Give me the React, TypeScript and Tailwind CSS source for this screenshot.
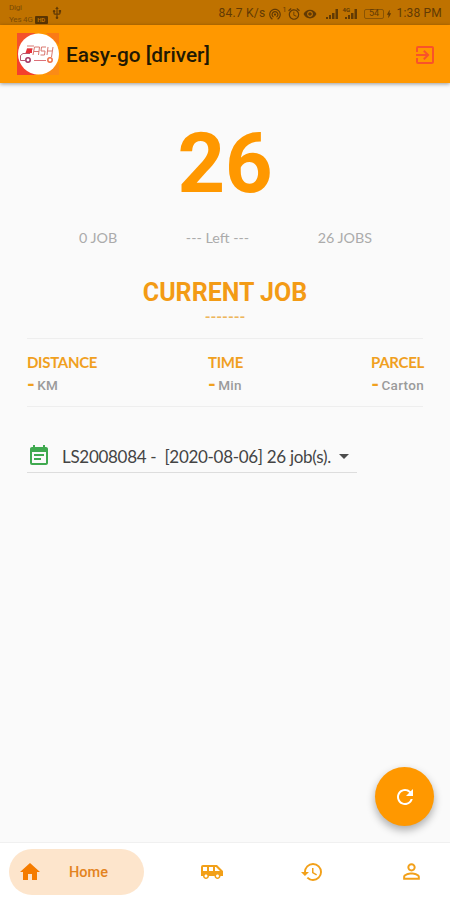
import React from "react";
import {
  MdExitToApp,
  MdHome,
  MdAirportShuttle,
  MdHistory,
  MdPersonOutline,
  MdRefresh,
  MdEventNote,
  MdArrowDropDown,
  MdUsb,
  MdAlarm,
  MdWifiTethering,
  MdRemoveRedEye,
  MdBolt,
} from "react-icons/md";

const roboto = "font-['Roboto','Liberation_Sans',sans-serif]";
const lato = "font-['Lato','Open_Sans',sans-serif]";

function SignalBars() {
  return (
    <svg viewBox="0 0 14 12" className="h-[12px] w-[14px] shrink-0" fill="currentColor">
      <rect x="0" y="9" width="2" height="2" />
      <rect x="3" y="7" width="2" height="4" />
      <rect x="6" y="5" width="2.500" height="6" />
      <rect x="9.500" y="1" width="2.500" height="10" />
    </svg>
  );
}

function StatusBar() {
  return (
    <div className="flex h-[25px] shrink-0 items-center bg-[#bf7200] pr-[8px] pl-[9px] text-[#623a04]">
      <div className="flex w-[40px] flex-col pt-[2px] text-[8px] leading-[12px] tracking-[-0.2px] text-[#7a4a06]">
        <span>Digi</span>
        <span className="flex items-center whitespace-nowrap">
          Yes 4G
          <span className="ml-[2px] flex h-[8px] w-[13px] shrink-0 items-center justify-center rounded-[1px] bg-[#5a3503] text-[6px] leading-none font-bold text-[#bf7200]">
            HD
          </span>
        </span>
      </div>
      <MdUsb className="ml-[1px] size-[14px]" />
      <div className="ml-auto flex items-center pt-[2px] text-[12px] leading-[23px]">
        <span className="w-[50px] tracking-[0.25px] whitespace-nowrap">84.7 K/s</span>
        <MdWifiTethering className="size-[14px]" />
        <span className="w-[5px] pb-[6px] text-[7px] leading-none">1</span>
        <MdAlarm className="size-[14px]" />
        <MdRemoveRedEye className="ml-[2px] size-[14px]" />
        <span className="ml-[9px] flex">
          <SignalBars />
        </span>
        <span className="ml-[2px] -mr-[5px] pb-[7px] text-[6px] leading-none font-bold">4G</span>
        <SignalBars />
        <span className="ml-[5px] flex h-[10px] w-[20px] items-center justify-center rounded-[2px] border border-[#8a5404] text-[9px] leading-none">
          54
        </span>
        <MdBolt className="size-[10px]" />
        <span className="w-[48px] text-right tracking-[0.2px] whitespace-nowrap">1:38 PM</span>
      </div>
    </div>
  );
}

function Logo() {
  return (
    <svg viewBox="0 0 42 42" className="size-[42px] shrink-0">
      <rect width="42" height="42" fill="#ff9800" />
      <path d="M0 0H18L0 24Z" fill="#f4512c" />
      <path d="M0 17V42H19Z" fill="#f4402d" />
      <path d="M29 0H42V12Z" fill="#fb7a16" />
      <path d="M42 29V42H28Z" fill="#fb8b16" />
      <circle cx="21.500" cy="21" r="20.500" fill="#fff" />
      <g fill="none" strokeWidth="1">
        <path d="M8 27.500H3.500V22.500L6 20.500H13" stroke="#b9566f" />
        <path d="M17 27.500H29" stroke="#dd7078" />
        <circle cx="11" cy="27" r="2.200" stroke="#a23563" strokeWidth="1.500" />
        <circle cx="33" cy="27" r="2.200" stroke="#ed7048" strokeWidth="1.500" />
        <path d="M10 13H17M10 16H16M16 22L17.500 14H22.500L21.500 22M17 18.500H22M29 14H24.500L24 18H28L27.500 22H23.500M31 14L30 22M30.500 18H35M36 14L34.500 24" stroke="#d9776f" />
      </g>
      <path d="M10 15.500H15V20H8.500Z" fill="#e5303a" />
    </svg>
  );
}

function AppBar() {
  return (
    <header className="relative z-10 flex h-[58px] shrink-0 items-center bg-[#ff9800] pr-[13px] pl-[17px] shadow-[0_1px_4px_rgba(0,0,0,0.4)]">
      <Logo />
      <h1 className="ml-[7px] pt-[2px] text-[20.800px] leading-6 font-medium whitespace-nowrap text-[#211803]">
        Easy-go [driver]
      </h1>
      <MdExitToApp className="mt-[1px] ml-auto size-[24px] text-[#f9532a]" />
    </header>
  );
}

type StatProps = { label: string; unit: string; align?: string };

function Stat({ label, unit, align = "" }: StatProps) {
  return (
    <div className={`flex flex-col ${align}`}>
      <span className={`${lato} text-[15px] leading-[22px] font-bold tracking-[-0.3px] text-[#f0a01f]`}>
        {label}
      </span>
      <span className="flex items-center text-[13.500px] leading-[24px] font-medium tracking-[0.3px] text-[#9b9b9b]">
        <span className="mr-[2px] -translate-y-[1px] text-[20px] font-bold text-[#f0a01f]">-</span>
        {unit}
      </span>
    </div>
  );
}

function BottomNav() {
  return (
    <nav className="flex h-[58px] shrink-0 items-center border-t border-[#f0f0f0] bg-white pl-[9px] text-[#f2a019]">
      <div className="flex h-[46px] w-[135px] items-center rounded-full bg-[#fde5cc] pl-[9px] text-[#f57c00]">
        <MdHome className="size-[24px]" />
        <span className="ml-[27px] pt-[2px] text-[14.500px] font-medium text-[#e38320]">Home</span>
      </div>
      <MdAirportShuttle className="ml-[56px] size-[24px]" />
      <MdHistory className="ml-[76px] size-[24px]" />
      <MdPersonOutline className="ml-[75px] size-[25px]" />
    </nav>
  );
}

export default function App() {
  return (
    <div className={`${roboto} relative flex h-[900px] w-[450px] flex-col overflow-hidden bg-[#fafafa]`}>
      <StatusBar />
      <AppBar />
      <main className="flex flex-1 flex-col">
        <div className="mt-[37px] text-center text-[83px] leading-[88px] font-bold text-[#ff9800]">26</div>
        <div className={`${lato} mt-[20px] flex justify-between pr-[78px] pl-[79px] text-[14.300px] leading-[20px] text-[#ababab]`}>
          <span>0 JOB</span>
          <span>--- Left ---</span>
          <span>26 JOBS</span>
        </div>
        <h2 className="mt-[29px] text-center text-[25px] leading-[32px] font-bold text-[#f39b15]">CURRENT JOB</h2>
        <div className={`${lato} -mt-[2px] text-center text-[15.500px] leading-[18px] font-bold text-[#edb65c]`}>-------</div>
        <section className="mx-[27px] mt-[13px] grid h-[69px] grid-cols-[181px_1fr_auto] border-y border-[#eeeeee] pt-[12px]">
          <Stat label="DISTANCE" unit="KM" />
          <Stat label="TIME" unit="Min" />
          <Stat label="PARCEL" unit="Carton" align="items-end -mr-px" />
        </section>
        <div className="mt-[33px] ml-[27px] flex h-[33px] w-[330px] items-center border-b border-[#dddddd]">
          <MdEventNote className="size-[24px] shrink-0 text-[#3fa94f]" />
          <span className={`${lato} ml-[11px] w-[270px] pt-[2px] text-[17px] tracking-[-0.300px] whitespace-nowrap text-[#444444]`}>
            LS2008084 -&nbsp; [2020-08-06] 26 job(s).
          </span>
          <MdArrowDropDown className="size-[24px] shrink-0 text-[#4c4c4c]" />
        </div>
      </main>
      <BottomNav />
      <button className="absolute right-[16px] bottom-[74px] flex size-[59px] items-center justify-center rounded-full bg-[#ff9800] text-white shadow-[0_4px_8px_rgba(0,0,0,0.32)]">
        <MdRefresh className="size-[24px]" />
      </button>
    </div>
  );
}
